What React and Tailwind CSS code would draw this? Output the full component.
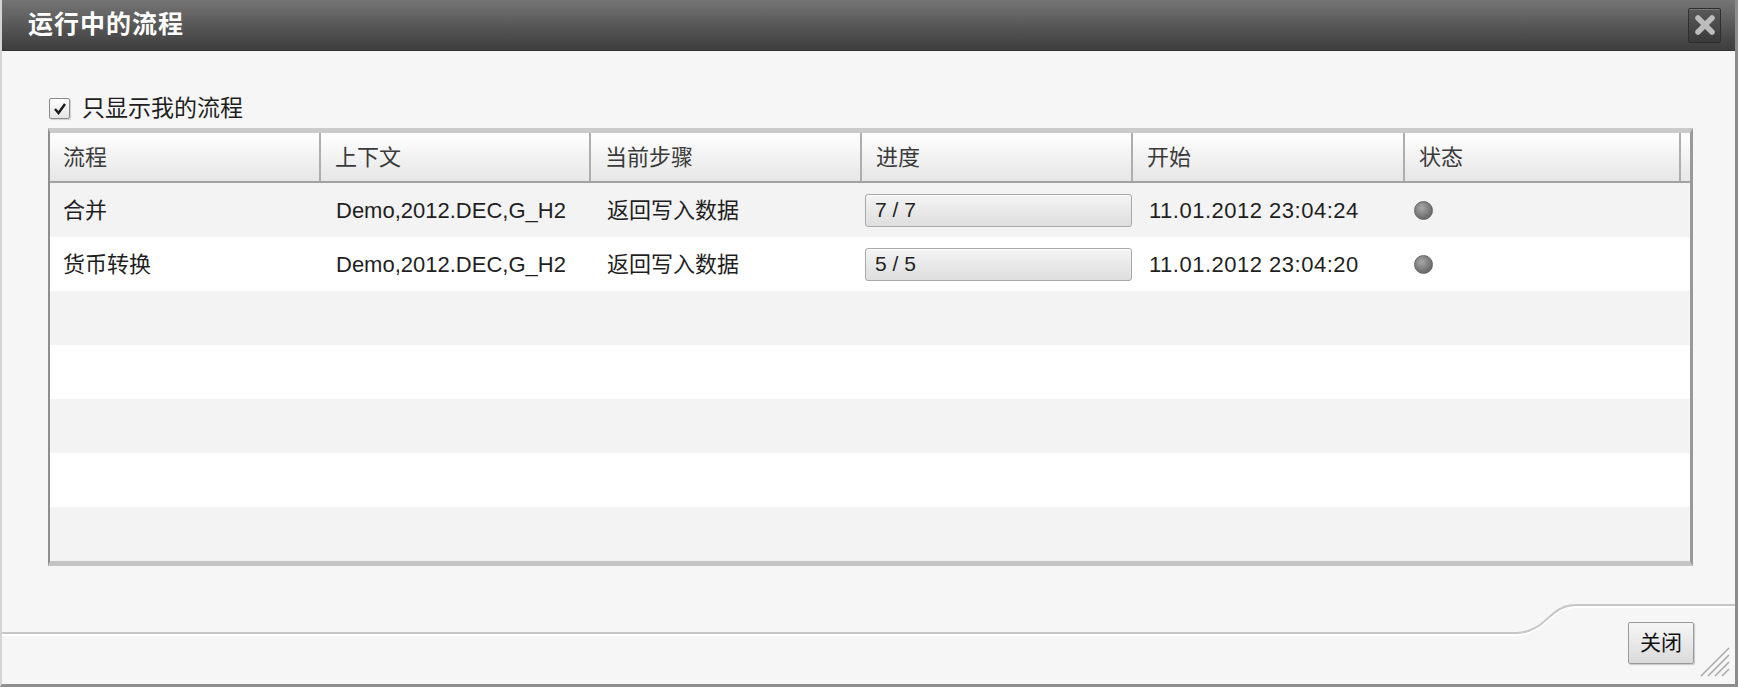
import React from 'react';

const FONT = { fontFamily: '"Liberation Sans", "Noto Sans CJK SC", sans-serif' };

const columns = [
  { key: 'name', label: '流程', width: 'w-[271px]' },
  { key: 'context', label: '上下文', width: 'w-[270px]' },
  { key: 'step', label: '当前步骤', width: 'w-[271px]' },
  { key: 'progress', label: '进度', width: 'w-[271px]' },
  { key: 'start', label: '开始', width: 'w-[272px]' },
  { key: 'status', label: '状态', width: 'w-[276px]' },
];

const processes = [
  { id: 1, name: '合并', context: 'Demo,2012.DEC,G_H2', step: '返回写入数据', progress: '7 / 7', start: '11.01.2012 23:04:24' },
  { id: 2, name: '货币转换', context: 'Demo,2012.DEC,G_H2', step: '返回写入数据', progress: '5 / 5', start: '11.01.2012 23:04:20' },
];

const ProcessRow = ({ row, index }) => {
  const bg = index % 2 === 0 ? 'bg-[#f3f3f3]' : 'bg-white';
  if (!row) return <div className={`h-[54px] ${bg}`} />;

  return (
    <div className={`flex h-[54px] items-center ${bg} text-[22px] text-[#1f1f1f]`}>
      <div className="w-[271px] pl-[13px]">{row.name}</div>
      <div className="w-[270px] pl-[15px]">{row.context}</div>
      <div className="w-[271px] pl-[16px]">{row.step}</div>
      <div className="w-[271px] pl-[3px] pr-[1px]">
        <div className="flex h-[33px] items-center rounded-[3px] border border-[#a8a8a8] bg-gradient-to-b from-[#f4f4f4] to-[#dedede] pl-[9px] text-[21px] text-[#222] shadow-[inset_0_1px_0_#ffffff]">
          {row.progress}
        </div>
      </div>
      <div className="w-[272px] pl-[16px] tracking-[0.5px]">{row.start}</div>
      <div className="w-[276px] pl-[9px]">
        <div className="h-[19px] w-[19px] rounded-full border border-[#636363] bg-[radial-gradient(circle_at_40%_35%,#a8a8a8,#747474_60%,#585858)]" />
      </div>
    </div>
  );
};

export default function App() {
  const rows = Array.from({ length: 7 }, (_, i) => processes[i] || null);

  return (
    <div
      className="relative flex h-[687px] w-[1738px] flex-col overflow-hidden border-b-[3px] border-l-2 border-r-[3px] border-b-[#8f8f8f] border-l-[#d4d4d4] border-r-[#8c8c8c] bg-[#f6f6f6]"
      style={FONT}
    >
      {/* Title bar */}
      <div className="flex h-[51px] shrink-0 items-center justify-between border-b border-[#333] bg-gradient-to-b from-[#757575] to-[#3d3d3d] pl-[26px] pr-[14px]">
        <span className="text-[25px] font-bold tracking-[1px] text-white">运行中的流程</span>
        <button className="flex h-[35px] w-[33px] items-center justify-center rounded-[2px] border border-[#2e2e2e] bg-gradient-to-b from-[#5a5a5a] to-[#3a3a3a] shadow-[inset_0_1px_0_#777]">
          <svg width="22" height="22" viewBox="0 0 22 22">
            <path d="M4 4 L18 18 M18 4 L4 18" stroke="#bdbdbd" strokeWidth="5.5" strokeLinecap="round" />
          </svg>
        </button>
      </div>

      {/* Body */}
      <div className="flex flex-col pl-[46px] pr-[42px] pt-[45px]">
        <label className="flex h-[25px] items-center gap-[12px] pl-[1px] text-[23px] text-[#1e1e1e]">
          <span className="flex h-[21px] w-[21px] items-center justify-center rounded-[2px] border border-[#8a8a8a] bg-gradient-to-b from-white to-[#e4e4e4] shadow-[1px_1px_1px_#cfcfcf]">
            <svg width="14" height="14" viewBox="0 0 14 14">
              <path d="M2 7 L5.5 11 L12 2" fill="none" stroke="#1a1a1a" strokeWidth="2.4" />
            </svg>
          </span>
          只显示我的流程
        </label>

        <div className="mt-[7px] w-[1645px] border-b-[5px] border-l-2 border-r-[3px] border-t-[5px] border-b-[#c4c4c4] border-l-[#8e8e8e] border-r-[#999] border-t-[#cacaca]">
          {/* Header */}
          <div className="flex h-[50px] border-b-2 border-[#a2a2a2] bg-gradient-to-b from-white to-[#e6e6e6] text-[22px] text-[#3a3a3a]">
            {columns.map((col, i) => (
              <div
                key={col.key}
                className={`${col.width} flex items-center border-r-2 border-[#adadad] ${i === 0 ? 'pl-[13px]' : 'pl-[14px]'}`}
              >
                {col.label}
              </div>
            ))}
            <div className="flex-1" />
          </div>

          {/* Rows */}
          {rows.map((row, i) => (
            <ProcessRow key={i} row={row} index={i} />
          ))}
        </div>
      </div>

      {/* Footer */}
      <div className="relative flex flex-1 items-end justify-end pb-[20px] pr-[41px]">
        <svg className="absolute inset-0" width="1733" height="118" viewBox="0 0 1733 118">
          <path d="M0 69 H1515 C1524 69 1530 66 1538 61 L1552 49 C1559 43 1565 41 1574 41 H1733" fill="none" stroke="#ffffff" strokeWidth="2" />
          <path d="M0 67 H1515 C1524 67 1530 64 1538 59 L1552 47 C1559 41 1565 39 1574 39 H1733" fill="none" stroke="#c6c6c6" strokeWidth="2" />
        </svg>
        <button className="relative h-[42px] w-[66px] rounded-[2px] border border-[#9a9a9a] bg-gradient-to-b from-[#f6f6f6] to-[#dadada] text-[21px] text-[#111] shadow-[1px_1px_1px_#c8c8c8]">
          关闭
        </button>
        <svg className="absolute bottom-[6px] right-[4px]" width="32" height="34" viewBox="0 0 32 34">
          <path d="M2 32 L30 4 M9 32 L30 11 M16 32 L30 18 M23 32 L30 25" stroke="#a8a8a8" strokeWidth="1.5" />
        </svg>
      </div>
    </div>
  );
}
